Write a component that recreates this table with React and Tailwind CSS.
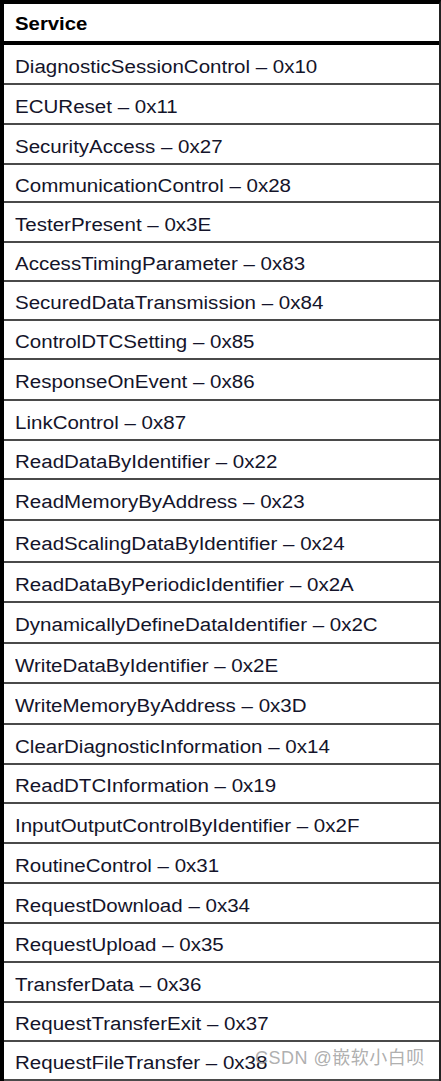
const ROWS = [
  ['DiagnosticSessionControl – 0x10', 'h-[40px]'],
  ['ECUReset – 0x11', 'h-[40px]'],
  ['SecurityAccess – 0x27', 'h-[40px]'],
  ['CommunicationControl – 0x28', 'h-[38px]'],
  ['TesterPresent – 0x3E', 'h-[40px]'],
  ['AccessTimingParameter – 0x83', 'h-[39px]'],
  ['SecuredDataTransmission – 0x84', 'h-[39px]'],
  ['ControlDTCSetting – 0x85', 'h-[39px]'],
  ['ResponseOnEvent – 0x86', 'h-[41px]'],
  ['LinkControl – 0x87', 'h-[40px]'],
  ['ReadDataByIdentifier – 0x22', 'h-[39px]'],
  ['ReadMemoryByAddress – 0x23', 'h-[41px]'],
  ['ReadScalingDataByIdentifier – 0x24', 'h-[42px]'],
  ['ReadDataByPeriodicIdentifier – 0x2A', 'h-[40px]'],
  ['DynamicallyDefineDataIdentifier – 0x2C', 'h-[41px]'],
  ['WriteDataByIdentifier – 0x2E', 'h-[40px]'],
  ['WriteMemoryByAddress – 0x3D', 'h-[41px]'],
  ['ClearDiagnosticInformation – 0x14', 'h-[40px]'],
  ['ReadDTCInformation – 0x19', 'h-[39px]'],
  ['InputOutputControlByIdentifier – 0x2F', 'h-[40px]'],
  ['RoutineControl – 0x31', 'h-[40px]'],
  ['RequestDownload – 0x34', 'h-[40px]'],
  ['RequestUpload – 0x35', 'h-[39px]'],
  ['TransferData – 0x36', 'h-[40px]'],
  ['RequestTransferExit – 0x37', 'h-[39px]'],
  ['RequestFileTransfer – 0x38', 'h-[39px]'],
];

export default function App() {
  return (
    <div className="relative w-[441px] h-[1081px] overflow-hidden bg-white font-['Liberation_Sans',Arial,sans-serif] text-[#14142a]">
      <div className="flex flex-col h-full border-t-4 border-l-4 border-r-2 border-t-black border-l-black border-r-[#222]">
        {/* header */}
        <div className="h-[41px] shrink-0 flex items-center pl-[11px] pt-[3px] border-b-4 border-black text-[18px] font-bold text-black">
          <span className="origin-left scale-x-[1.13] whitespace-nowrap">Service</span>
        </div>
        {ROWS.map(([label, h]) => (
          <div
            key={label}
            className={`${h} shrink-0 flex items-center pl-[11px] pt-[6px] border-b-2 border-[#4a4a4a] text-[18px]`}
          >
            <span className="origin-left scale-x-[1.14] whitespace-nowrap">{label}</span>
          </div>
        ))}
      </div>

      {/* watermark */}
      <div className="absolute left-[255px] top-[1045px] text-[18px] text-[#9a9a9a]/80 font-['Liberation_Sans','Noto_Sans_CJK_SC',sans-serif] tracking-[0.5px]">
        CSDN @嵌软小白呗
      </div>
    </div>
  );
}
